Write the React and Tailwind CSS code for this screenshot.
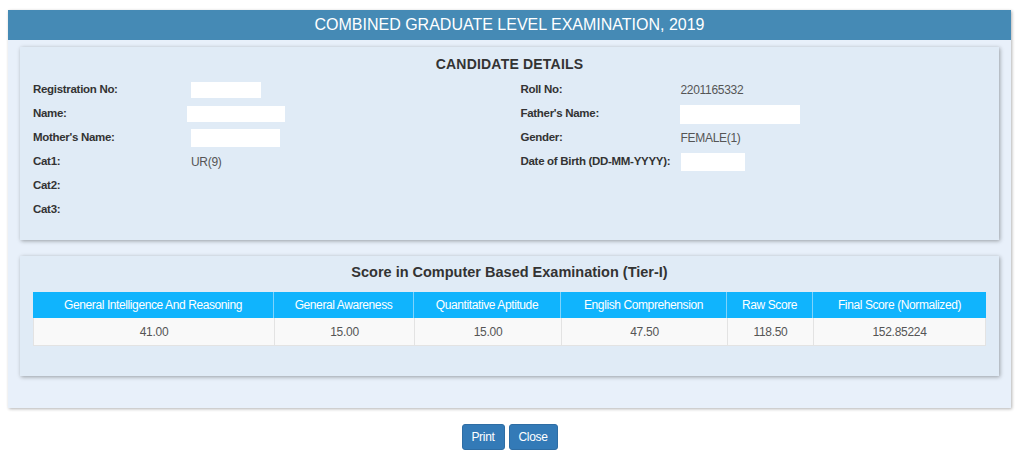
import React from 'react'

const leftRows = [
  { label: 'Registration No:', box: 'ml-0 w-[70px] h-[16px]' },
  { label: 'Name:', box: '-ml-[4px] w-[98px] h-[16px]' },
  { label: "Mother's Name:", box: 'ml-0 w-[89px] h-[18px]' },
  { label: 'Cat1:', value: 'UR(9)' },
  { label: 'Cat2:', value: '' },
  { label: 'Cat3:', value: '' },
]

const rightRows = [
  { label: 'Roll No:', value: '2201165332' },
  { label: "Father's Name:", box: '-ml-[1px] w-[120px] h-[19px]' },
  { label: 'Gender:', value: 'FEMALE(1)' },
  { label: 'Date of Birth (DD-MM-YYYY):', box: 'ml-0 w-[64px] h-[18px]' },
]

const cols = [
  { head: 'General Intelligence And Reasoning', val: '41.00', w: 'w-[240px]' },
  { head: 'General Awareness', val: '15.00', w: 'w-[140px]' },
  { head: 'Quantitative Aptitude', val: '15.00', w: 'w-[147px]' },
  { head: 'English Comprehension', val: '47.50', w: 'w-[166px]' },
  { head: 'Raw Score', val: '118.50', w: 'w-[86px]' },
  { head: 'Final Score (Normalized)', val: '152.85224', w: 'flex-1' },
]

function DetailRow({ row, labelW }) {
  return (
    <div className="flex items-center h-[24px]">
      <div className={`${labelW} shrink-0 whitespace-nowrap font-bold text-[11.5px] tracking-[-0.3px] text-[#333]`}>
        {row.label}
      </div>
      {row.box ? (
        <div className={`bg-white ${row.box}`} />
      ) : (
        <div className="text-[#555] tracking-[-0.3px]">{row.value}</div>
      )}
    </div>
  )
}

export default function App() {
  return (
    <div className="min-h-[458px] bg-white text-[12px] font-['Liberation_Sans',Arial,sans-serif]">
      <div className="pt-[10px] pl-[8px] pr-[13px]">
        <div className="bg-[#e8f0fa] shadow-[1px_1px_3px_rgba(0,0,0,0.3)]">
          <div className="h-[30px] bg-[#458ab5] text-white text-[16px] flex items-center justify-center">
            COMBINED GRADUATE LEVEL EXAMINATION, 2019
          </div>

          <div className="px-[12px] pt-[7px] pb-[32px]">
            <div className="bg-[#e0ebf6] shadow-[1px_1px_4px_rgba(0,0,0,0.35)] px-[13px] pt-[7px] pb-[18px]">
              <h2 className="text-center font-bold text-[14px] tracking-[0.2px] text-[#333] h-[24px] leading-[20px]">
                CANDIDATE DETAILS
              </h2>
              <div className="grid grid-cols-2">
                <div>
                  {leftRows.map((r) => (
                    <DetailRow key={r.label} row={r} labelW="w-[158px]" />
                  ))}
                </div>
                <div className="pl-[11px]">
                  {rightRows.map((r) => (
                    <DetailRow key={r.label} row={r} labelW="w-[160px]" />
                  ))}
                </div>
              </div>
            </div>

            <div className="mt-[16px] bg-[#e0ebf6] shadow-[1px_1px_4px_rgba(0,0,0,0.35)] px-[13px] pt-[6px] pb-[30px]">
              <h2 className="text-center font-bold text-[14.5px] text-[#333] h-[30px] leading-[20px]">
                Score in Computer Based Examination (Tier-I)
              </h2>
              <div className="flex flex-col">
                <div className="flex h-[26px] bg-[#10b4fd] text-white tracking-[-0.4px]">
                  {cols.map((c, i) => (
                    <div
                      key={c.head}
                      className={`${c.w} flex items-center justify-center ${i > 0 ? 'border-l border-[#7fd3fb]' : ''}`}
                    >
                      {c.head}
                    </div>
                  ))}
                </div>
                <div className="flex h-[28px] bg-[#f9f9f9] text-[#555] tracking-[-0.3px] border border-t-0 border-[#e3e3e3]">
                  {cols.map((c, i) => (
                    <div
                      key={c.head}
                      className={`${c.w} flex items-center justify-center ${i > 0 ? 'border-l border-[#e3e3e3]' : ''}`}
                    >
                      {c.val}
                    </div>
                  ))}
                </div>
              </div>
            </div>
          </div>
        </div>
      </div>

      <div className="flex justify-center gap-[4px] mt-[16px] pr-[5px]">
        <button className="h-[26px] w-[43px] rounded-[3px] bg-[#337ab7] border border-[#2e6da4] text-white text-[12px] tracking-[-0.3px]">
          Print
        </button>
        <button className="h-[26px] w-[49px] rounded-[3px] bg-[#337ab7] border border-[#2e6da4] text-white text-[12px] tracking-[-0.3px]">
          Close
        </button>
      </div>
    </div>
  )
}
